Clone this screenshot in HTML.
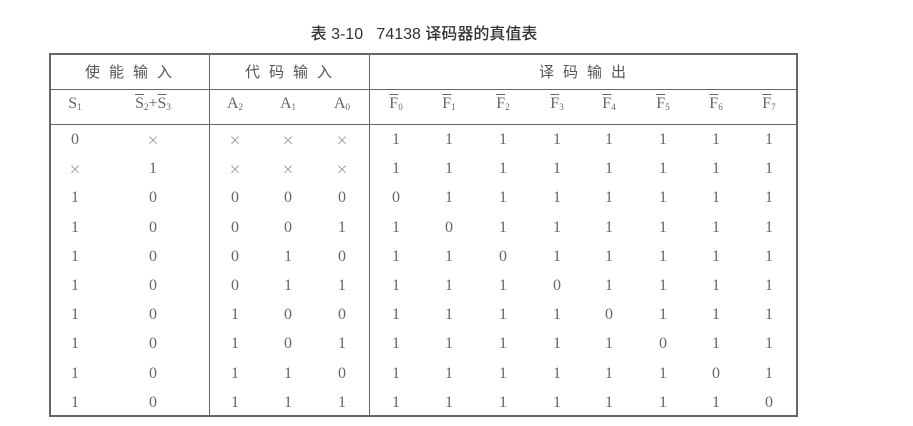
<!DOCTYPE html><html><head><meta charset="utf-8"><style>
body{margin:0;background:#fff;width:913px;height:426px;overflow:hidden;position:relative;font-family:"Liberation Serif","Noto Serif CJK SC",serif;color:#666}
.t{position:absolute;top:20px;left:285px;width:278px;text-align:center;font:500 16px "Liberation Sans","Noto Sans CJK SC",sans-serif;color:#333;white-space:nowrap}
.l{position:absolute;background:#666}
.c{position:absolute;transform:translateX(-50%);font-size:16px;white-space:nowrap}
.h{font-family:"Noto Sans CJK SC",sans-serif;font-size:15px;letter-spacing:9px;color:#555;margin-left:4px}
sub{font-size:9px;vertical-align:-2px}
.o{text-decoration:overline}
.x{font-family:"DejaVu Sans",sans-serif;font-size:15px;font-weight:200;color:#888}
</style></head><body>
<div class="t">表 3-10&nbsp;&nbsp;&nbsp;74138 译码器的真值表</div>
<div class="l" style="left:49px;top:53px;width:749px;height:2px"></div>
<div class="l" style="left:49px;top:415px;width:749px;height:1.5px"></div>
<div class="l" style="left:49px;top:89px;width:749px;height:1px"></div>
<div class="l" style="left:49px;top:124px;width:749px;height:1px"></div>
<div class="l" style="left:49px;top:53px;width:1.5px;height:363px"></div>
<div class="l" style="left:796px;top:53px;width:1.5px;height:363px"></div>
<div class="l" style="left:209px;top:53px;width:1px;height:363px"></div>
<div class="l" style="left:369px;top:53px;width:1px;height:363px"></div>
<div class="c h" style="left:129px;top:61px">使能输入</div>
<div class="c h" style="left:289px;top:61px">代码输入</div>
<div class="c h" style="left:583px;top:61px">译码输出</div>
<div id="r"></div>
<script>
var xs=[75,153,235,288,342,396,449,503,557,609,663,716,769];
var hd=['S<sub>1</sub>','<span class="o">S</span><sub>2</sub>+<span class="o">S</span><sub>3</sub>','A<sub>2</sub>','A<sub>1</sub>','A<sub>0</sub>'];
for(var i=0;i<8;i++)hd.push('<span class="o">F</span><sub>'+i+'</sub>');
var rows=[['0','×','×','×','×'],['×','1','×','×','×']];
for(var k=0;k<8;k++){rows.push(['1','0',''+(k>>2&1),''+(k>>1&1),''+(k&1)]);}
var h='';
for(var j=0;j<13;j++)h+='<div class="c" style="left:'+xs[j]+'px;top:95px">'+hd[j]+'</div>';
rows.forEach(function(r,ri){var y=131+ri*29.2;
for(var j=0;j<13;j++){var v=j<5?r[j]:(ri<2?'1':(ri-2==j-5?'0':'1'));
if(v=='×')v='<span class="x">×</span>';
h+='<div class="c" style="left:'+xs[j]+'px;top:'+y+'px">'+v+'</div>';}});
document.getElementById('r').innerHTML=h;
</script>
</body></html>
